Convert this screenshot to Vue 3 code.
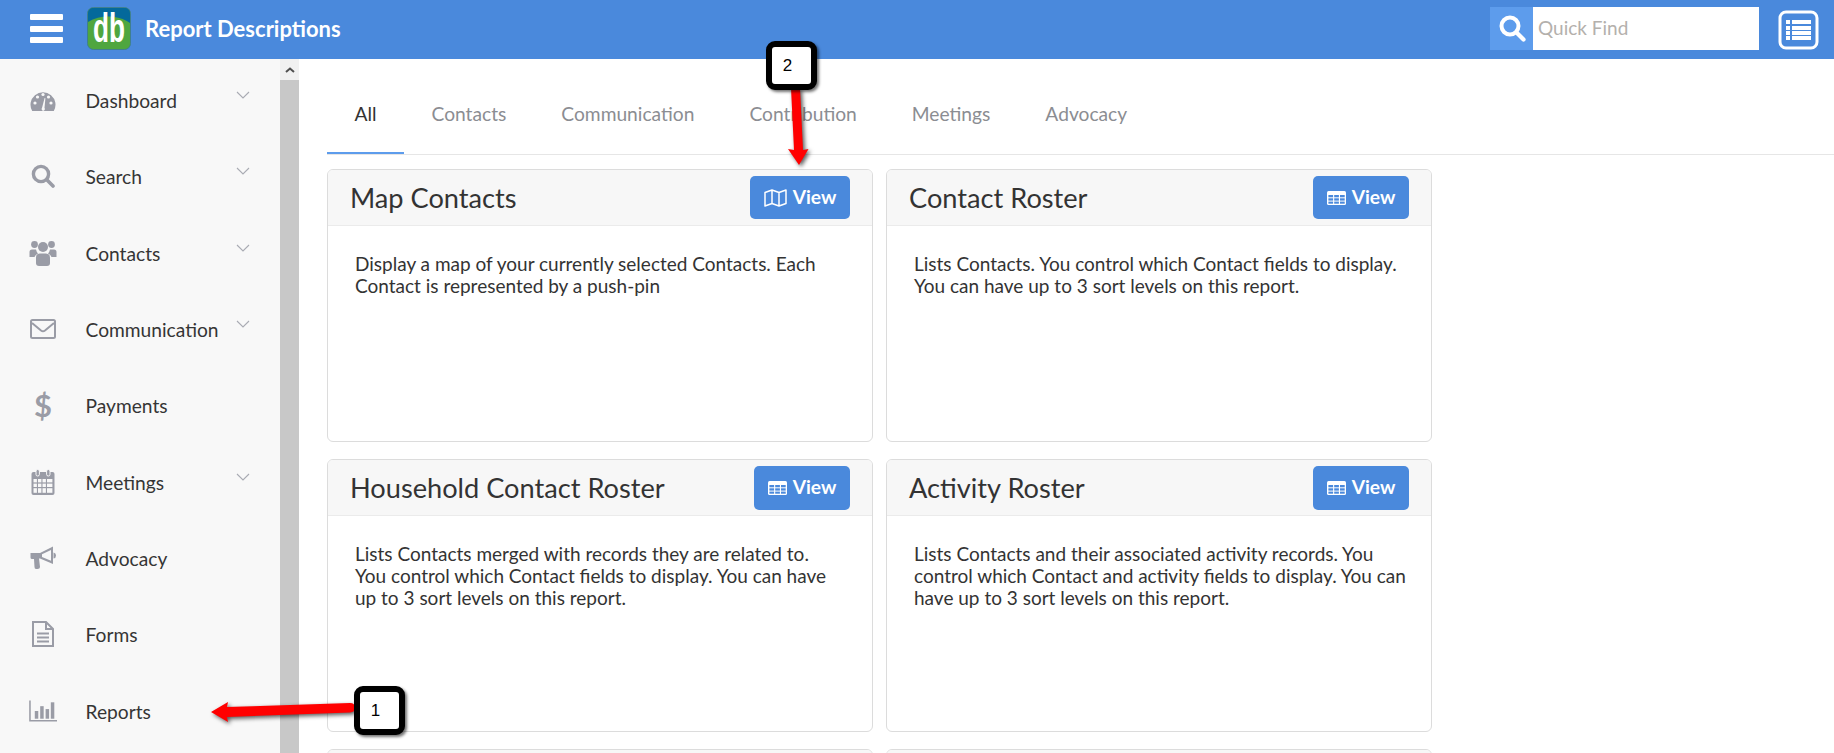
<script setup>
const navItems = [
  { label: 'Dashboard', icon: 'dash', more: true },
  { label: 'Search', icon: 'search', more: true },
  { label: 'Contacts', icon: 'users', more: true },
  { label: 'Communication', icon: 'mail', more: true },
  { label: 'Payments', icon: 'dollar', more: false },
  { label: 'Meetings', icon: 'cal', more: true },
  { label: 'Advocacy', icon: 'horn', more: false },
  { label: 'Forms', icon: 'file', more: false },
  { label: 'Reports', icon: 'chart', more: false },
]
const tabs = ['All', 'Contacts', 'Communication', 'Contribution', 'Meetings', 'Advocacy']
const cards = [
  { title: 'Map Contacts', icon: 'map', btn: 'btn-map', text: 'Display a map of your currently selected Contacts. Each Contact is represented by a push-pin' },
  { title: 'Contact Roster', icon: 'table', btn: 'btn-table', text: 'Lists Contacts. You control which Contact fields to display. You can have up to 3 sort levels on this report.' },
  { title: 'Household Contact Roster', icon: 'table', btn: 'btn-table btn-tall', text: 'Lists Contacts merged with records they are related to. You control which Contact fields to display. You can have up to 3 sort levels on this report.' },
  { title: 'Activity Roster', icon: 'table', btn: 'btn-table btn-tall', text: 'Lists Contacts and their associated activity records. You control which Contact and activity fields to display. You can have up to 3 sort levels on this report.' },
]
</script>

<template>
  <div class="page">
    <header class="topbar">
      <div class="burger"><i></i><i></i><i></i></div>
      <svg class="logo" viewBox="0 0 44 43">
        <rect x="0.5" y="0.5" width="43" height="42" rx="6" fill="#4fa63f" stroke="#3f7f8f"/>
        <path d="M1 15 V6 A5 5 0 0 1 6 1 H38 A5 5 0 0 1 43 6 V16 C32 8 14 7 1 15 Z" fill="#04699b"/>
        <text x="6" y="35" class="logo-text" textLength="32" lengthAdjust="spacingAndGlyphs">db</text>
      </svg>
      <div class="app-title">Report Descriptions</div>
      <div class="quick">
        <div class="quick-btn">
          <svg viewBox="0 0 28 28" width="28" height="28"><circle cx="12" cy="12" r="8.5" fill="none" stroke="#fff" stroke-width="4"/><line x1="18.5" y1="18.5" x2="25.5" y2="25.5" stroke="#fff" stroke-width="4.2" stroke-linecap="round"/></svg>
        </div>
        <input class="quick-input" placeholder="Quick Find" />
      </div>
      <svg class="list-icon" viewBox="0 0 41 40" width="41" height="40">
        <rect x="2" y="2" width="37" height="36" rx="6" fill="none" stroke="#fff" stroke-width="3"/>
        <g fill="#fff">
          <rect x="8" y="10" width="4" height="4"/><rect x="14" y="10" width="19" height="4"/>
          <rect x="8" y="16" width="4" height="4"/><rect x="14" y="16" width="19" height="4"/>
          <rect x="8" y="21" width="4" height="4"/><rect x="14" y="21" width="19" height="4"/>
          <rect x="8" y="26" width="4" height="4"/><rect x="14" y="26" width="19" height="4"/>
        </g>
      </svg>
    </header>

    <div class="body">
      <aside class="sidebar">
        <nav class="nav">
          <div v-for="item in navItems" :key="item.label" class="nav-row">
            <div class="nav-icon">
              <svg v-if="item.icon === 'dash'" viewBox="0 0 26 21" width="26" height="21">
                <path d="M2.2 21 A12.5 12.5 0 1 1 23.8 21 Z" fill="#9a9ca6"/>
                <g fill="#f8f8f8">
                  <circle cx="5" cy="13" r="1.6"/><circle cx="7.5" cy="7" r="1.6"/><circle cx="13" cy="4.5" r="1.6"/><circle cx="18.5" cy="7" r="1.6"/><circle cx="21" cy="13" r="1.6"/>
                  <path d="M12 18 L14.6 8 L15.4 8.3 L14.5 18 A1.6 1.6 0 1 1 12 18 Z"/>
                </g>
              </svg>
              <svg v-else-if="item.icon === 'search'" viewBox="0 0 24 24" width="24" height="24">
                <circle cx="10" cy="10" r="7.6" fill="none" stroke="#9a9ca6" stroke-width="3.4"/>
                <line x1="15.8" y1="15.8" x2="22" y2="22" stroke="#9a9ca6" stroke-width="3.6" stroke-linecap="round"/>
              </svg>
              <svg v-else-if="item.icon === 'users'" viewBox="0 0 28 26" width="28" height="26">
                <g fill="#9a9ca6">
                  <circle cx="5.5" cy="4.5" r="3.4"/><circle cx="22.5" cy="4.5" r="3.4"/><circle cx="14" cy="7" r="5"/>
                  <path d="M0.5 17 V12 Q0.5 9.5 3 9.5 H7 Q7.5 12 9 13.5 Q6 15 5.5 17 Z"/>
                  <path d="M27.5 17 V12 Q27.5 9.5 25 9.5 H21 Q20.5 12 19 13.5 Q22 15 22.5 17 Z"/>
                  <path d="M7 23 V17.5 Q7 13.5 11 13.5 H17 Q21 13.5 21 17.5 V23 Q21 26 18 26 H10 Q7 26 7 23 Z"/>
                </g>
              </svg>
              <svg v-else-if="item.icon === 'mail'" viewBox="0 0 26 20" width="26" height="20">
                <rect x="1" y="1" width="24" height="18" rx="1.5" fill="none" stroke="#9a9ca6" stroke-width="2"/>
                <path d="M2 4 L11 11.5 Q13 13 15 11.5 L24 4" fill="none" stroke="#9a9ca6" stroke-width="2"/>
              </svg>
              <span v-else-if="item.icon === 'dollar'" class="dollar">$</span>
              <svg v-else-if="item.icon === 'cal'" viewBox="0 0 24 26" width="24" height="26">
                <rect x="0.5" y="3" width="23" height="23" rx="2" fill="#9a9ca6"/>
                <rect x="5" y="0.5" width="3.4" height="6.5" rx="1.6" fill="#9a9ca6" stroke="#f8f8f8" stroke-width="1"/>
                <rect x="15.6" y="0.5" width="3.4" height="6.5" rx="1.6" fill="#9a9ca6" stroke="#f8f8f8" stroke-width="1"/>
                <g fill="#f8f8f8">
                  <rect x="2.5" y="10" width="3.4" height="3.4"/><rect x="7" y="10" width="3.4" height="3.4"/><rect x="11.5" y="10" width="3.4" height="3.4"/><rect x="16" y="10" width="5.4" height="3.4"/>
                  <rect x="2.5" y="14.6" width="3.4" height="3.4"/><rect x="7" y="14.6" width="3.4" height="3.4"/><rect x="11.5" y="14.6" width="3.4" height="3.4"/><rect x="16" y="14.6" width="5.4" height="3.4"/>
                  <rect x="2.5" y="19.2" width="3.4" height="4.6"/><rect x="7" y="19.2" width="3.4" height="4.6"/><rect x="11.5" y="19.2" width="3.4" height="4.6"/><rect x="16" y="19.2" width="5.4" height="4.6"/>
                </g>
              </svg>
              <svg v-else-if="item.icon === 'horn'" viewBox="0 0 26 23" width="26" height="23">
                <g fill="#9a9ca6">
                  <path d="M0.5 7 H10 L23 0.5 V18 L10 12.5 H9 L10 21 Q10 23 7.5 23 H6 Q4.5 23 4.5 21 L4 13 H2 Q0.5 13 0.5 11.5 Z"/>
                  <path d="M23.5 6.5 Q26 7 26 9.5 Q26 12 23.5 12.5 Z"/>
                </g>
                <path d="M12 8.3 L21 4 V14.8 L12 11 Z" fill="#f8f8f8"/>
              </svg>
              <svg v-else-if="item.icon === 'file'" viewBox="0 0 22 26" width="22" height="26">
                <path d="M1 1 H14 L21 8 V25 H1 Z" fill="none" stroke="#9a9ca6" stroke-width="2"/>
                <path d="M14 1 V8 H21" fill="none" stroke="#9a9ca6" stroke-width="2"/>
                <path d="M5 12.5 H17 M5 16.5 H17 M5 20.5 H17" stroke="#9a9ca6" stroke-width="2"/>
              </svg>
              <svg v-else-if="item.icon === 'chart'" viewBox="0 0 29 22" width="29" height="22">
                <path d="M1 0 V21 H29" fill="none" stroke="#9a9ca6" stroke-width="1.6"/>
                <g fill="#9a9ca6">
                  <rect x="6" y="11" width="3.6" height="8"/><rect x="11.6" y="6" width="3.6" height="13"/><rect x="17.2" y="9" width="3.6" height="10"/><rect x="22.6" y="2" width="3.6" height="17"/>
                </g>
              </svg>
            </div>
            <span class="nav-label">{{ item.label }}</span>
            <svg v-if="item.more" class="chev" viewBox="0 0 14 8" width="14" height="8"><path d="M1 1 L7 7 L13 1" fill="none" stroke="#a9abb3" stroke-width="1.1"/></svg>
          </div>
        </nav>
      </aside>
      <div class="scrollbar">
        <div class="scroll-btn"><svg viewBox="0 0 10 6" width="10" height="6"><path d="M1 5 L5 1.5 L9 5" fill="none" stroke="#505050" stroke-width="2"/></svg></div>
      </div>

      <main class="main">
        <div class="tabs">
          <div v-for="(t, i) in tabs" :key="t" class="tab" :class="{ active: i === 0 }">{{ t }}</div>
        </div>
        <div class="grid">
          <section v-for="c in cards" :key="c.title" class="card">
            <div class="card-head">
              <h3 class="card-title">{{ c.title }}</h3>
              <button class="view" :class="c.btn">
                <svg v-if="c.icon === 'map'" viewBox="0 0 23 18" width="23" height="18">
                  <path d="M1 3.5 L8 1 L15 3.5 L22 1 V14.5 L15 17 L8 14.5 L1 17 Z M8 1 V14.5 M15 3.5 V17" fill="none" stroke="#fff" stroke-width="1.5" stroke-linejoin="round"/>
                </svg>
                <svg v-else viewBox="0 0 19 14" width="19" height="14">
                  <rect x="0" y="0" width="19" height="14" rx="1.5" fill="#fff"/>
                  <g fill="#4a89dc">
                    <rect x="1.4" y="4" width="4.7" height="2.3"/><rect x="7.2" y="4" width="4.7" height="2.3"/><rect x="13" y="4" width="4.7" height="2.3"/>
                    <rect x="1.4" y="7.3" width="4.7" height="2.3"/><rect x="7.2" y="7.3" width="4.7" height="2.3"/><rect x="13" y="7.3" width="4.7" height="2.3"/>
                    <rect x="1.4" y="10.6" width="4.7" height="2.1"/><rect x="7.2" y="10.6" width="4.7" height="2.1"/><rect x="13" y="10.6" width="4.7" height="2.1"/>
                  </g>
                </svg>
                <span class="view-label">View</span>
              </button>
            </div>
            <p class="card-text">{{ c.text }}</p>
          </section>
          <section class="card"><div class="card-head"></div></section>
          <section class="card"><div class="card-head"></div></section>
        </div>
      </main>
    </div>

    <svg class="arrows" viewBox="0 0 1834 753" width="1834" height="753">
      <path class="arrow" d="M211 712 L228 702 L227 707 L350 703 Q355 703 355 708 Q355 712 350 712.5 L227 717 L228 722 Z"/>
      <path class="arrow" d="M791 88 L800 88 L803 150 L808.5 149 L799 165 L788 149 L794 150 Z"/>
    </svg>
    <div class="callout callout-one">1</div>
    <div class="callout callout-two">2</div>
  </div>
</template>

<style>
html, body { margin: 0; background: #fff; }
</style>

<style scoped>
.page {
  position: relative;
  width: 1834px;
  height: 753px;
  overflow: hidden;
  display: flex;
  flex-direction: column;
  font-family: Lato, "Noto Sans", sans-serif;
  color: #333;
  background: #fff;
}
.topbar {
  flex: 0 0 59px;
  background: #4a89dc;
  display: flex;
  align-items: center;
  padding: 0 15px 0 30px;
  box-sizing: border-box;
}
.burger {
  width: 33px;
  margin-bottom: 2px;
  display: flex;
  flex-direction: column;
  gap: 5.5px;
}
.burger i {
  display: block;
  height: 6px;
  background: #fff;
  border-radius: 1px;
}
.logo { width: 44px; height: 43px; margin: 0 0 3px 24px; overflow: visible; }
.logo-text {
  font-family: "Liberation Sans", sans-serif;
  font-weight: 700;
  font-size: 40px;
  fill: #fff;
}
.app-title {
  margin: 0 0 3px 14px;
  color: #fff;
  font-size: 22px;
  font-weight: 700;
}
.quick { margin: 0 0 3px auto; display: flex; height: 43px; }
.quick-btn {
  width: 43px;
  background: #5d9cec;
  display: flex;
  align-items: center;
  justify-content: center;
}
.quick-input {
  width: 226px;
  height: 43px;
  box-sizing: border-box;
  border: 0;
  outline: 0;
  padding: 0 5px 2px;
  background: #fff;
  font-family: Lato, sans-serif;
  font-size: 19px;
}
.quick-input::placeholder { color: #b4b0ac; opacity: 1; }
.list-icon { margin-left: 19px; }

.body { flex: 1; display: flex; min-height: 0; }
.sidebar { flex: 0 0 280px; background: #f8f8f8; }
.nav { padding-top: 4px; }
.nav-row {
  height: 76.3px;
  display: flex;
  align-items: center;
  padding: 0 30px 0 29px;
}
.nav-icon {
  width: 28px;
  height: 28px;
  margin-bottom: 2px;
  display: flex;
  align-items: center;
  justify-content: center;
  flex: none;
}
.dollar {
  font-size: 31px;
  font-weight: 700;
  color: #9a9ca6;
  line-height: 28px;
}
.nav-label { margin: 0 0 1px 28.5px; font-size: 19.2px; color: #353535; }
.chev { margin-left: auto; margin-bottom: 12px; }
.scrollbar { flex: 0 0 19px; background: #c8c8c8; margin-right: 1px; }
.scroll-btn {
  height: 21px;
  background: #f1f1f1;
  display: flex;
  align-items: center;
  justify-content: center;
}

.main { flex: 1; padding: 25px 0 0 27px; min-width: 0; }
.tabs { display: flex; border-bottom: 1px solid #e6e6e6; }
.tab {
  padding: 15px 27.5px 23px;
  border-bottom: 2px solid transparent;
  line-height: 30px;
  font-size: 19.2px;
  color: #8b8d92;
}
.tab.active { color: #333; border-bottom-color: #5d9cec; }
.grid {
  display: grid;
  grid-template-columns: 546px 546px;
  grid-auto-rows: 273px;
  column-gap: 13px;
  row-gap: 17px;
  margin-top: 14px;
}
.card {
  border: 1px solid #dcdcdc;
  border-radius: 6px;
  overflow: hidden;
  box-sizing: border-box;
  background: #fff;
}
.card-head {
  height: 56px;
  box-sizing: border-box;
  display: flex;
  align-items: center;
  justify-content: space-between;
  padding: 0 22px 0 22px;
  background: #f7f7f7;
  border-bottom: 1px solid #ebebeb;
}
.card-title { margin: 0; font-size: 27.2px; font-weight: 400; color: #333; }
.view {
  height: 43px;
  padding: 0;
  border: 0;
  border-radius: 5px;
  background: #4a89dc;
  color: #fff;
  font-family: Lato, sans-serif;
  font-size: 19.2px;
  font-weight: 700;
  display: flex;
  align-items: center;
  justify-content: center;
  gap: 6px;
}
.view-label { padding-bottom: 2px; }
.btn-map { width: 100px; }
.btn-table { width: 96px; }
.btn-tall { height: 44px; }
.card-text {
  margin: 0;
  padding: 27px 20px 0 27px;
  font-size: 19px;
  line-height: 22px;
  color: #333;
}
.card:nth-child(odd) .card-text { padding-right: 31px; }

.arrows { position: absolute; left: 0; top: 0; pointer-events: none; }
.arrow { fill: #f00; filter: drop-shadow(2px 2px 2px rgba(0, 0, 0, 0.65)); }
.callout {
  position: absolute;
  width: 51px;
  height: 49px;
  box-sizing: border-box;
  border: 6px solid #000;
  border-radius: 9px;
  background: #fff;
  display: flex;
  align-items: center;
  justify-content: center;
  padding-right: 8px;
  font-family: "Liberation Sans", sans-serif;
  font-size: 17px;
  color: #000;
  box-shadow: 2px 2px 3px rgba(0, 0, 0, 0.55);
}
.callout-one { left: 354px; top: 686px; }
.callout-two { left: 766px; top: 41px; }
</style>
